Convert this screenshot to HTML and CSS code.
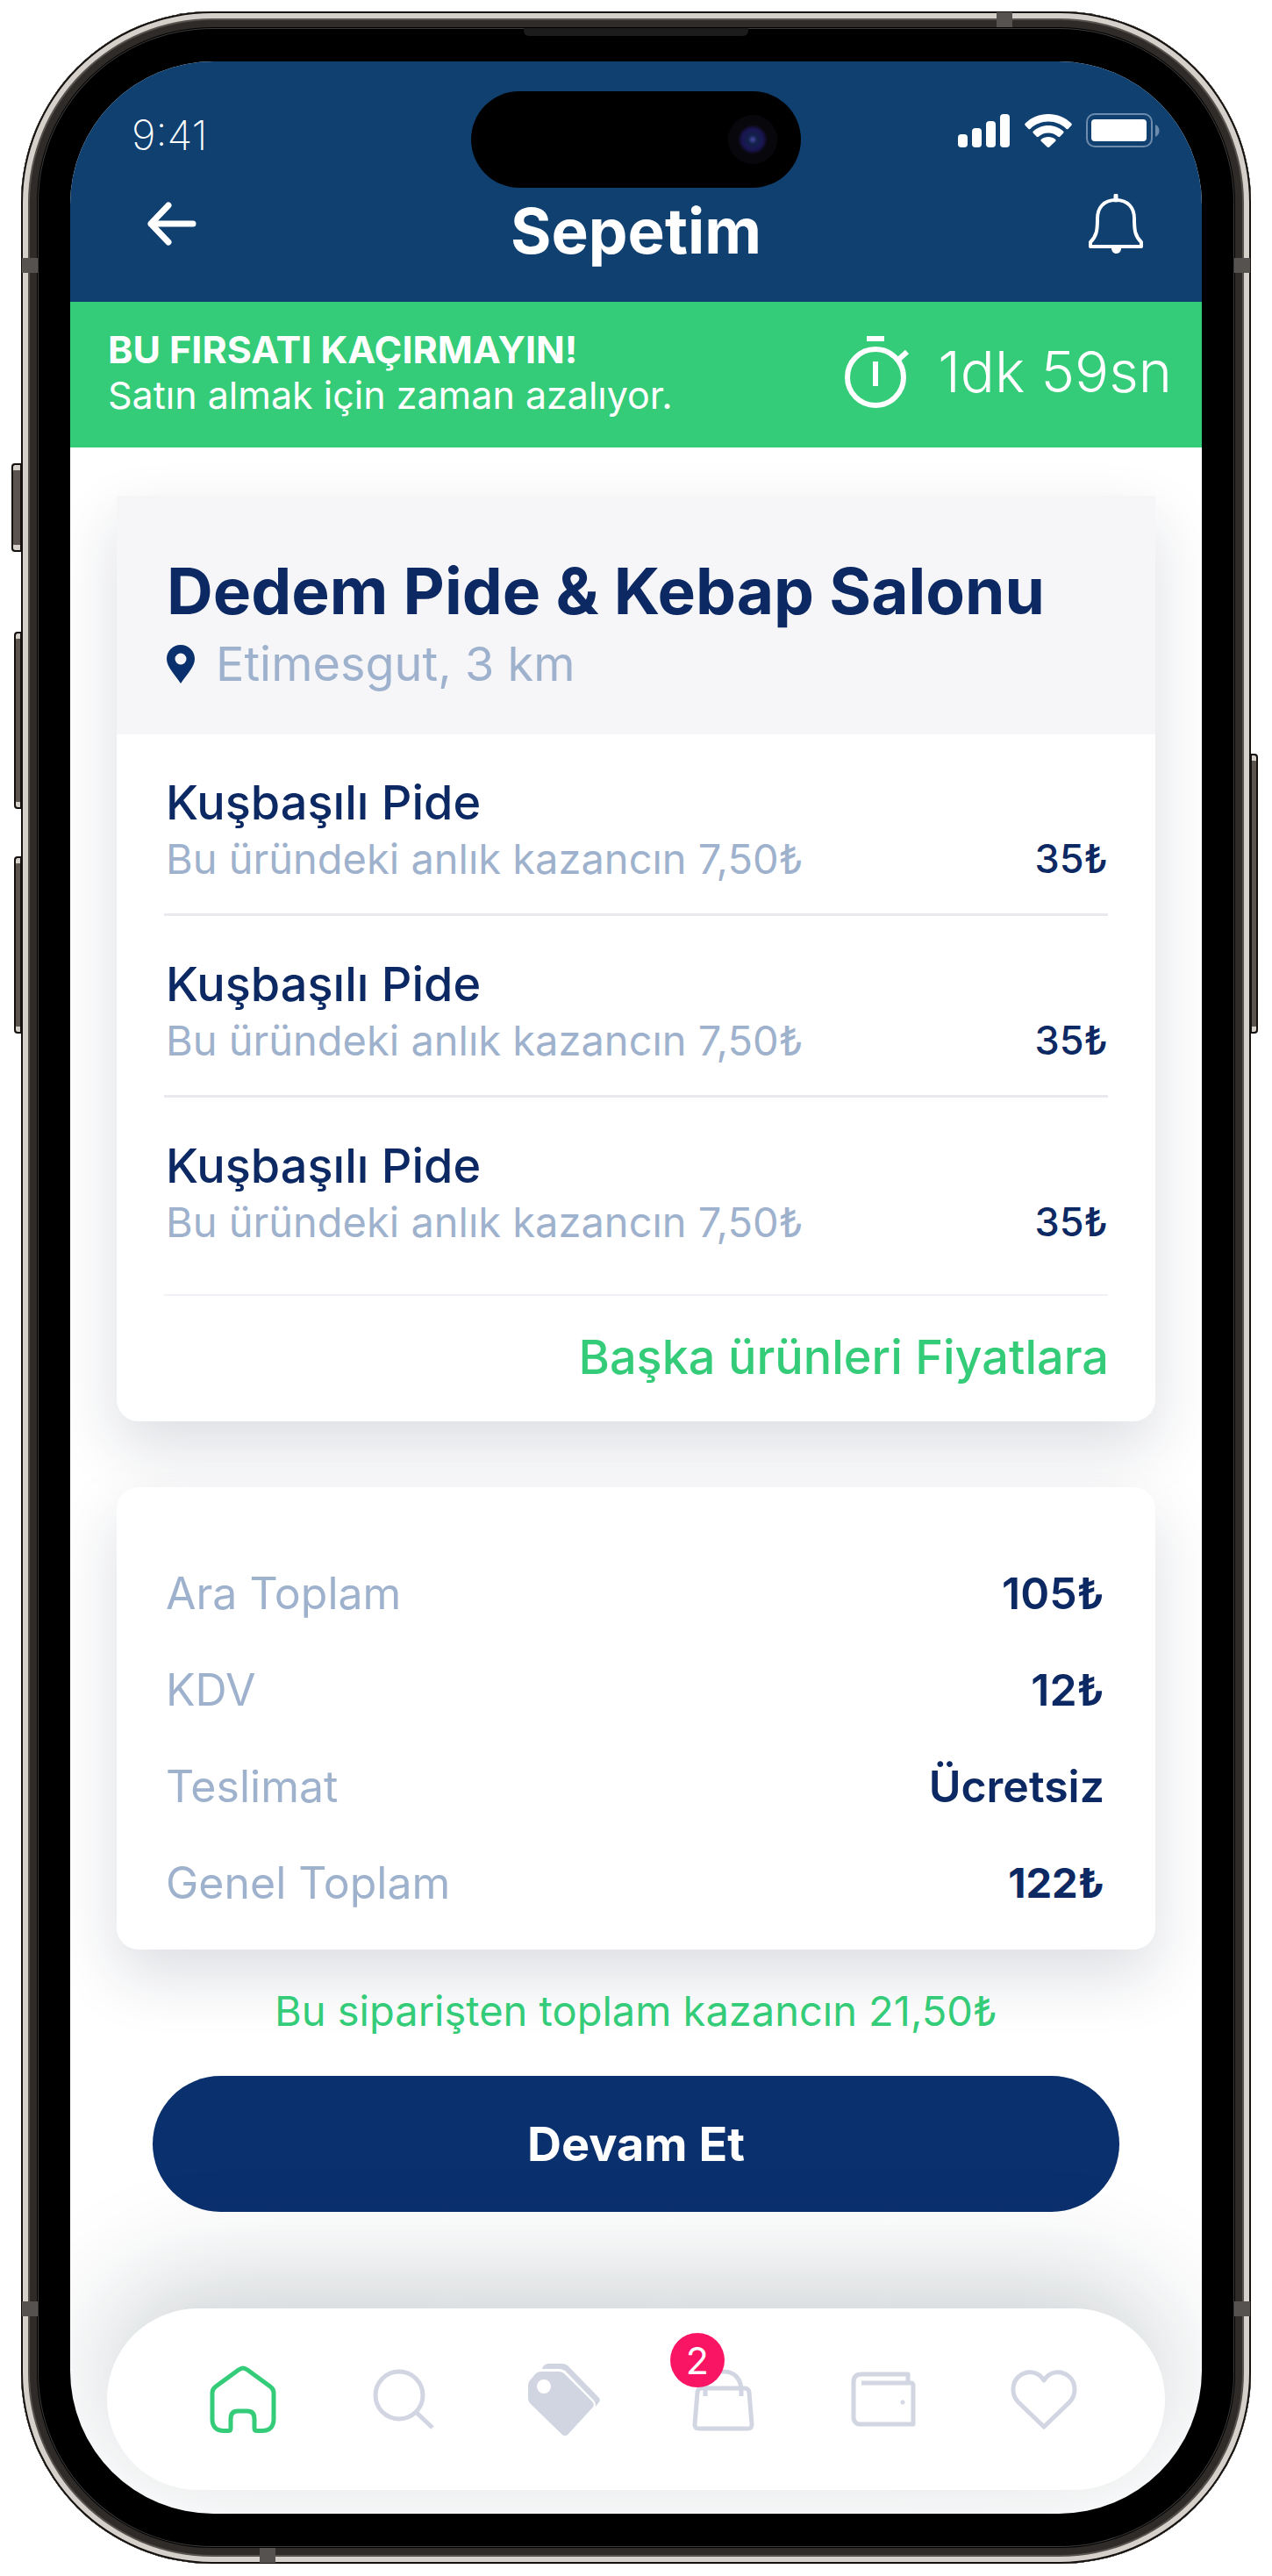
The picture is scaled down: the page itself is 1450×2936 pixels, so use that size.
FILE: index.html
```
<!DOCTYPE html>
<html lang="tr">
<head>
  <meta charset="UTF-8">
  <meta name="viewport" content="width=device-width, initial-scale=1">
  <title>Sepetim</title>
  <link rel="stylesheet" href="styles.css">
</head>
<body>
  <div class="phone">
    <span class="side-btn mute"></span>
    <span class="side-btn volume-up"></span>
    <span class="side-btn volume-down"></span>
    <span class="side-btn power"></span>
    <span class="band band-top"></span>
    <span class="band band-bottom"></span>
    <span class="band band-left-top"></span>
    <span class="band band-right-top"></span>
    <span class="band band-left-bottom"></span>
    <span class="band band-right-bottom"></span>
    <span class="speaker"></span>

    <div class="screen">
      <div class="island"><span class="camera"></span></div>

      <header class="header">
        <div class="status-bar">
          <span class="time">9:41</span>
          <div class="status-icons">
            <svg width="60" height="38" viewBox="0 0 60 38" fill="#fff">
              <rect x="0" y="23" width="11" height="15" rx="4"/>
              <rect x="16" y="16" width="11" height="22" rx="4"/>
              <rect x="32" y="8" width="11" height="30" rx="4"/>
              <rect x="48" y="0" width="11" height="38" rx="4"/>
            </svg>
            <svg width="54" height="38" viewBox="0 0 54 38" fill="#fff">
              <path d="M27 0C17 0 7.500 4 .8 10.500c-.8.800-.8 1.600-.1 2.400l3.600 3.800c.7.700 1.500.700 2.300 0C12 11.500 19.300 8.500 27 8.500s15 3 20.400 8.200c.8.700 1.600.7 2.300 0l3.600-3.800c.7-.8.700-1.600-.1-2.400C46.500 4 37 0 27 0z"/>
              <path d="M27 13c-6.500 0-12.500 2.400-17 6.500-.8.700-.8 1.600-.1 2.300l3.800 3.900c.6.600 1.500.600 2.200 0 3-2.700 6.900-4.200 11.100-4.200s8.100 1.500 11.100 4.200c.7.600 1.600.6 2.200 0l3.800-3.900c.7-.7.700-1.600-.1-2.300C39.500 15.400 33.500 13 27 13z"/>
              <path d="M27 26c-3 0-5.800 1-8 2.700-.8.700-.8 1.600-.1 2.300l6.800 6.500c.8.700 1.800.700 2.600 0l6.800-6.500c.7-.7.700-1.600-.1-2.300C32.800 27 30 26 27 26z"/>
            </svg>
            <svg width="84" height="40" viewBox="0 0 84 40">
              <rect x="1" y="1" width="74" height="37" rx="9" fill="none" stroke="#6d8bac" stroke-width="2"/>
              <rect x="6" y="7" width="63" height="25" rx="4" fill="#fff"/>
              <path d="M79 13c3 1.500 4.500 4 4.500 7s-1.500 5.500-4.500 7z" fill="#6d8bac"/>
            </svg>
          </div>
        </div>
        <div class="title-bar">
          <button class="icon-btn" type="button" aria-label="Geri">
            <svg width="56" height="50" viewBox="0 0 56 50" fill="none" stroke="#fff" stroke-width="7" stroke-linecap="round" stroke-linejoin="round">
              <path d="M52 25H4M24 4 4 25l20 21"/>
            </svg>
          </button>
          <h1 class="title">Sepetim</h1>
          <button class="icon-btn" type="button" aria-label="Bildirimler">
            <svg width="64" height="68" viewBox="0 0 64 68" fill="none" stroke="#fff" stroke-width="4" stroke-linejoin="round">
              <path d="M32 7C18 7 11 16 11 28c0 14-1 20-8 27v5h58v-5c-7-7-8-13-8-27C53 16 46 7 32 7z"/>
              <path d="M32 2v5" stroke-width="5" stroke-linecap="round"/>
              <path d="M27 62h11c0 3-2 6-5.500 6S27 65 27 62z" fill="#fff" stroke="none"/>
            </svg>
          </button>
        </div>
      </header>

      <section class="offer">
        <div class="offer-text">
          <strong>BU FIRSATI KAÇIRMAYIN!</strong>
          <p>Satın almak için zaman azalıyor.</p>
        </div>
        <div class="timer">
          <svg width="74" height="84" viewBox="0 0 74 84" fill="none" stroke="#fff" stroke-width="6">
            <circle cx="35" cy="48" r="32"/>
            <path d="M25 4h20M35 30v28M61 28l10-9"/>
          </svg>
          <span>1dk 59sn</span>
        </div>
      </section>

      <main class="content">
        <section class="card">
          <div class="shop">
            <h2>Dedem Pide &amp; Kebap Salonu</h2>
            <p class="location">
              <svg width="32" height="44" viewBox="0 0 32 44" fill="#0b306e" fill-rule="evenodd">
                <path d="M16 0C7 0 0 7 0 16c0 9 10 19 16 28 6-9 16-19 16-28C32 7 25 0 16 0zm0 9.500a6.500 6.500 0 1 1 0 13 6.500 6.500 0 0 1 0-13z"/>
              </svg>
              Etimesgut, 3 km
            </p>
          </div>
          <ul class="items">
            <li class="item">
              <h3>Kuşbaşılı Pide</h3>
              <p><span>Bu üründeki anlık kazancın 7,50₺</span><b>35₺</b></p>
            </li>
            <li class="item">
              <h3>Kuşbaşılı Pide</h3>
              <p><span>Bu üründeki anlık kazancın 7,50₺</span><b>35₺</b></p>
            </li>
            <li class="item">
              <h3>Kuşbaşılı Pide</h3>
              <p><span>Bu üründeki anlık kazancın 7,50₺</span><b>35₺</b></p>
            </li>
          </ul>
          <a class="more" href="#">Başka ürünleri Fiyatlara</a>
        </section>

        <dl class="card totals">
          <div class="total-row"><dt>Ara Toplam</dt><dd>105₺</dd></div>
          <div class="total-row"><dt>KDV</dt><dd>12₺</dd></div>
          <div class="total-row"><dt>Teslimat</dt><dd>Ücretsiz</dd></div>
          <div class="total-row grand"><dt>Genel Toplam</dt><dd>122₺</dd></div>
        </dl>

        <p class="saving">Bu siparişten toplam kazancın 21,50₺</p>
        <button class="continue-btn" type="button">Devam Et</button>
      </main>

      <nav class="tab-bar">
        <a class="tab active" href="#" aria-label="Ana sayfa">
          <svg width="84" height="84" viewBox="0 0 84 84">
            <path d="M47 6 73 25c2.500 1.800 4 4 4 7v30c0 9-5 13.500-13 13.500h-6c-2 0-3-1-3-3V62c0-6-3-9-8-9H36c-5 0-8 3-8 9v10.500c0 2-1 3-3 3h-5C12 75.500 7 71 7 62V32c0-3 1.500-5.200 4-7L37 6c4-2.800 6-2.800 10 0z"/>
          </svg>
        </a>
        <a class="tab" href="#" aria-label="Ara">
          <svg width="84" height="84" viewBox="0 0 84 84">
            <circle cx="37" cy="35" r="27"/>
            <path d="m57 55 18 17"/>
          </svg>
        </a>
        <a class="tab solid" href="#" aria-label="Fırsatlar">
          <svg width="84" height="84" viewBox="0 0 84 84" fill-rule="evenodd">
            <path d="M17 8h20c3 0 5 1 7 3l31 31c2.500 2.500 2.500 5 0 7.500L48 79c-3 3-5 3-8 0L5 45c-2-2-3-4-3-7V25c0-4 1-6 3-8l5-6c2-2 4-3 7-3zm3 9a8 8 0 1 0 0 16 8 8 0 0 0 0-16z"/>
            <path d="M18 5c1-4 4-6 8-6h15c3 0 5 1 7 3l34 35c2.500 2.500 2.500 4.500 0 7l-3 4c0-4-1-6-3-8L46 9c-3-3-5-4-9-4z"/>
          </svg>
        </a>
        <a class="tab" href="#" aria-label="Sepet">
          <svg width="84" height="84" viewBox="0 0 84 84">
            <path d="M17 27h49c3 0 5 2 5 5l3 36c0 4-1 5-5 5H14c-4 0-5-1-5-5l3-36c0-3 2-5 5-5zM21 36v-6C21 16 30 8 42 8s20 8 20 22v6"/>
          </svg>
          <span class="badge">2</span>
        </a>
        <a class="tab" href="#" aria-label="Cüzdan">
          <svg width="84" height="84" viewBox="0 0 84 84">
            <path d="M70 21V11H17c-6 0-9 3-9 9v40c0 5 3 8 8 8h60V24c0-2-1-3-3-3H17"/>
            <circle cx="64" cy="43" r="1" stroke-width="3"/>
          </svg>
        </a>
        <a class="tab" href="#" aria-label="Favoriler">
          <svg width="84" height="84" viewBox="0 0 84 84">
            <path d="M42 71 13 43C4 34 6 20 13 14c9-8 22-7 29 4 7-11 20-12 29-4 7 6 9 20 0 29z"/>
          </svg>
        </a>
      </nav>
    </div>
  </div>
</body>
</html>
```
FILE: styles.css
```
* {
  box-sizing: border-box;
}

body {
  margin: 0;
  padding: 13px 24px;
  background: #fff;
  color: #0c2963;
  font-family: Inter, "Liberation Sans", sans-serif;
}

h1, h2, h3, p, ul, dl, dd {
  margin: 0;
  padding: 0;
}

svg {
  display: block;
}

/* device frame */
.phone {
  position: relative;
  padding: 57px 56px;
  border-radius: 218px;
  background: #000;
  box-shadow:
    inset 0 0 0 2px #14110f,
    inset 0 0 0 8px #d6d0ca,
    inset 0 0 0 10px #57524d,
    inset 0 0 0 18px #2e2b28,
    inset 0 0 0 19px #000,
    inset 0 0 0 20px #3a3a3a;
}

.side-btn {
  position: absolute;
  width: 9px;
  border: 2px solid #14110f;
  background: #5b544e;
  box-shadow: inset 0 8px 0 -2px #d6d0ca, inset 0 -8px 0 -2px #d6d0ca;
}

.mute {
  top: 515px;
  left: -11px;
  width: 12px;
  height: 101px;
  border-radius: 4px 0 0 4px;
}

.volume-up {
  top: 707px;
  left: -8px;
  height: 202px;
  border-radius: 4px 0 0 4px;
}

.volume-down {
  top: 963px;
  left: -8px;
  height: 202px;
  border-radius: 4px 0 0 4px;
}

.power {
  top: 846px;
  right: -8px;
  height: 319px;
  border-radius: 0 4px 4px 0;
}

.band {
  position: absolute;
  width: 18px;
  height: 17px;
  background: #55524f;
}

.band-top {
  top: 1px;
  right: 272px;
}

.band-bottom {
  bottom: 1px;
  left: 272px;
}

.band-left-top {
  top: 281px;
  left: 1px;
}

.band-right-top {
  top: 281px;
  right: 1px;
}

.band-left-bottom {
  bottom: 282px;
  left: 1px;
}

.band-right-bottom {
  bottom: 282px;
  right: 1px;
}

.speaker {
  position: absolute;
  top: 19px;
  left: 50%;
  width: 256px;
  height: 9px;
  margin-left: -128px;
  border-radius: 0 0 6px 6px;
  background: #1c1c1c;
}

.screen {
  position: relative;
  overflow: hidden;
  border-radius: 163px;
  background: #fff;
}

.island {
  position: absolute;
  top: 34px;
  left: 50%;
  width: 376px;
  height: 110px;
  margin-left: -188px;
  border-radius: 55px;
  background: #000;
}

.camera {
  position: absolute;
  top: 27px;
  right: 27px;
  width: 56px;
  height: 56px;
  border-radius: 50%;
  background: radial-gradient(circle, #4a4aa8 0, #12224a 5px, #1a1552 12px, #08070b 17px);
}

/* header */
.header {
  padding: 54px 48px 33px 70px;
  background: #104070;
  color: #fff;
}

.status-bar {
  display: flex;
  align-items: center;
  justify-content: space-between;
  height: 58px;
}

.time {
  font-size: 47px;
  font-weight: 200;
}

.status-icons {
  display: flex;
  align-items: center;
  gap: 16px;
  margin-bottom: 8px;
}

.title-bar {
  display: flex;
  align-items: flex-start;
  margin-top: 31px;
  padding: 0 18px;
}

.icon-btn {
  display: flex;
  align-items: center;
  height: 84px;
  padding: 0;
  border: 0;
  background: none;
  cursor: pointer;
}

.title {
  flex: 1;
  padding: 8px 14px 6px 0;
  font-size: 71px;
  font-weight: 700;
  line-height: 84px;
  text-align: center;
}

/* countdown banner */
.offer {
  display: flex;
  align-items: center;
  justify-content: space-between;
  padding: 28px 34px 34px 43px;
  background: #34cc78;
  color: #fff;
  font-size: 43px;
  line-height: 52px;
}

.offer strong {
  font-weight: 700;
}

.timer {
  display: flex;
  align-items: center;
  gap: 32px;
  font-size: 65px;
  font-weight: 300;
}

/* cards */
.content {
  padding: 55px 53px 0;
}

.card {
  border-radius: 25px;
  background: #fff;
  box-shadow: 0 30px 70px rgba(20, 35, 60, 0.15);
}

.card:first-child {
  border-radius: 0 0 25px 25px;
}

.shop {
  padding: 67px 57px 39px;
  background: #f6f6f9;
}

.shop h2 {
  font-size: 73px;
  font-weight: 700;
  line-height: 84px;
}

.location {
  display: flex;
  align-items: center;
  gap: 24px;
  color: #9fb2cd;
  font-size: 54px;
  line-height: 82px;
}

.items {
  margin: 0 54px;
  list-style: none;
}

.item {
  padding: 46px 0 30px 2px;
  border-bottom: 3px solid #e8eaf0;
  line-height: 64px;
}

.item:last-child {
  padding-bottom: 50px;
  border-bottom: 2px solid #f0f1f5;
}

.item h3 {
  font-size: 54px;
  font-weight: 500;
}

.item p {
  display: flex;
  justify-content: space-between;
  color: #9fb2cd;
  font-size: 47px;
}

.item b {
  color: #0c2963;
  font-size: 45px;
  font-weight: 500;
}

.more {
  display: block;
  padding: 38px 53px 41px;
  color: #34cc78;
  font-size: 54px;
  font-weight: 500;
  line-height: 64px;
  text-align: right;
  text-decoration: none;
}

.totals {
  margin-top: 75px;
  padding: 66px 58px 21px 56px;
}

.total-row {
  display: flex;
  justify-content: space-between;
  font-size: 50px;
  line-height: 110px;
}

.total-row dt {
  color: #9fb2cd;
}

.total-row dd {
  font-weight: 600;
}

.grand dd {
  font-size: 47px;
  font-weight: 700;
}

.saving {
  margin-top: 40px;
  color: #34cc78;
  font-size: 47px;
  line-height: 60px;
  text-align: center;
}

.continue-btn {
  display: block;
  width: calc(100% - 82px);
  height: 155px;
  margin: 44px auto 0;
  border: 0;
  border-radius: 78px;
  background: #0b306e;
  color: #fff;
  font-family: inherit;
  font-size: 54px;
  font-weight: 700;
  cursor: pointer;
}

/* bottom navigation */
.tab-bar {
  display: flex;
  justify-content: space-between;
  align-items: center;
  height: 207px;
  margin: 110px 42px 27px;
  padding: 4px 96px 0 113px;
  border-radius: 104px;
  background: #fff;
  box-shadow: 0 -30px 130px rgba(20, 40, 55, 0.22);
}

.tab {
  position: relative;
}

.tab svg {
  overflow: visible;
  fill: none;
  stroke: #d2d5e2;
  stroke-width: 5;
  stroke-linejoin: round;
}

.tab.active svg {
  stroke: #34cc78;
}

.tab.solid svg {
  fill: #d0d5e1;
  stroke: none;
}

.badge {
  position: absolute;
  top: -36px;
  left: -19px;
  width: 62px;
  height: 62px;
  border-radius: 50%;
  background: #fa1464;
  color: #fff;
  font-size: 43px;
  line-height: 62px;
  text-align: center;
}
```
